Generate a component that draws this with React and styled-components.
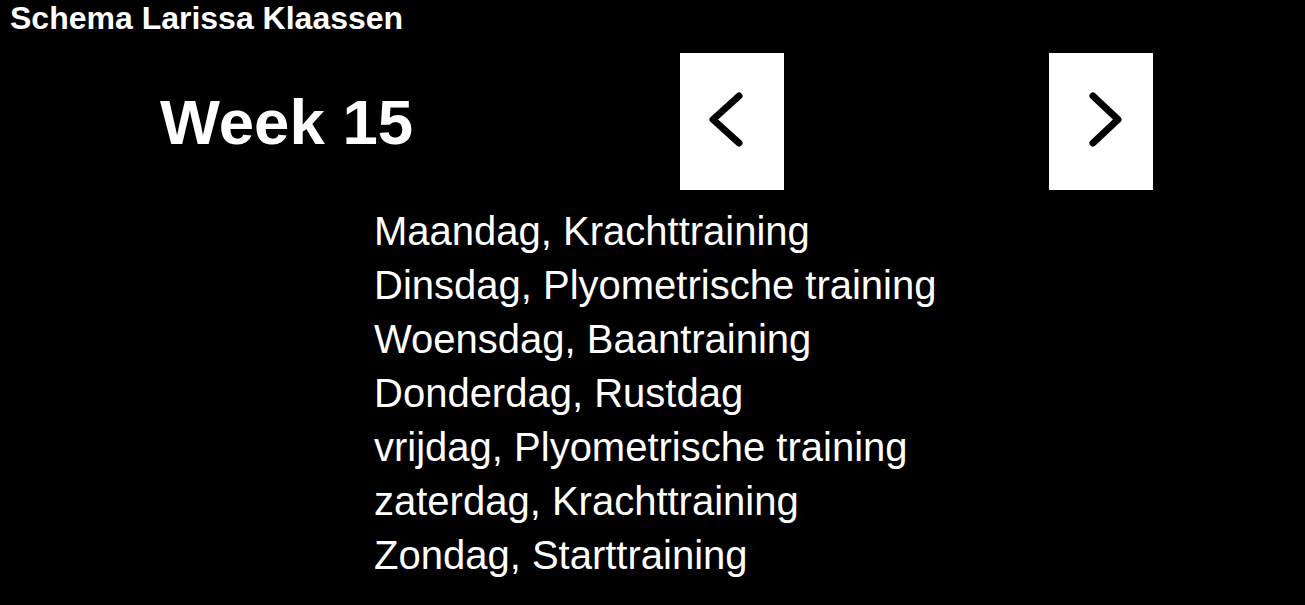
import React from "react";
import styled, { createGlobalStyle } from "styled-components";

const Global = createGlobalStyle`
  html, body {
    margin: 0;
    padding: 0;
    background: #000;
  }
  body {
    font-family: "Liberation Sans", Arial, Helvetica, sans-serif;
    color: #fff;
  }
`;

const Page = styled.div`
  width: 1305px;
  height: 605px;
  background: #000;
  color: #fff;
  display: flex;
  flex-direction: column;
  overflow: hidden;
`;

const Title = styled.h1`
  margin: 0;
  padding-left: 10px;
  font-size: 32px;
  font-weight: 700;
  line-height: 37px;
`;

const Header = styled.div`
  display: flex;
  align-items: center;
  margin-top: 16px;
  padding-left: 160px;
`;

const Week = styled.h2`
  margin: 0;
  width: 256px;
  font-size: 63.5px;
  font-weight: 700;
  line-height: 74px;
  white-space: nowrap;
`;

const NavButton = styled.button`
  width: 104px;
  height: 137px;
  margin-left: ${(p) => p.$offset}px;
  background: #fff;
  border: none;
  padding: 0;
  display: flex;
  align-items: center;
  justify-content: center;
  cursor: pointer;
`;

const List = styled.ul`
  list-style: none;
  margin: 14px 0 0;
  padding: 0 0 0 374px;
`;

const Item = styled.li`
  font-size: 40px;
  line-height: 54px;
  white-space: nowrap;
`;

const Chevron = ({ dir }) => (
  <svg width="104" height="137" viewBox="0 0 104 137" fill="none">
    <path
      d={dir === "left" ? "M59 43 L33 66.5 L59 90" : "M44 43 L69 66.5 L44 90"}
      stroke="#000"
      strokeWidth="7"
      strokeLinecap="round"
      strokeLinejoin="round"
    />
  </svg>
);

const days = [
  "Maandag, Krachttraining",
  "Dinsdag, Plyometrische training",
  "Woensdag, Baantraining",
  "Donderdag, Rustdag",
  "vrijdag, Plyometrische training",
  "zaterdag, Krachttraining",
  "Zondag, Starttraining",
];

export default function App() {
  return (
    <>
      <Global />
      <Page>
        <Title>Schema Larissa Klaassen</Title>
        <Header>
          <Week>Week 15</Week>
          <NavButton $offset={264} aria-label="Vorige week">
            <Chevron dir="left" />
          </NavButton>
          <NavButton $offset={265} aria-label="Volgende week">
            <Chevron dir="right" />
          </NavButton>
        </Header>
        <List>
          {days.map((d) => (
            <Item key={d}>{d}</Item>
          ))}
        </List>
      </Page>
    </>
  );
}
